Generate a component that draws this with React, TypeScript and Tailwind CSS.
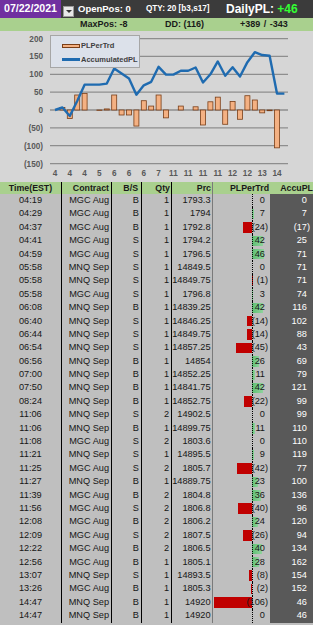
import React from "react";

type Row = [string, string, string, number, string, number, number];

const rows: Row[] = [
  ["04:19", "MGC Aug", "B", 1, "1793.3", 0, 0],
  ["04:29", "MGC Aug", "B", 1, "1794", 7, 7],
  ["04:37", "MGC Aug", "B", 1, "1792.8", -24, -17],
  ["04:41", "MGC Aug", "S", 1, "1794.2", 42, 25],
  ["04:59", "MGC Aug", "S", 1, "1796.5", 46, 71],
  ["05:58", "MNQ Sep", "S", 1, "14849.5", 0, 71],
  ["05:58", "MNQ Sep", "S", 1, "14849.75", -1, 71],
  ["05:58", "MGC Aug", "S", 1, "1796.8", 3, 74],
  ["06:08", "MNQ Sep", "B", 1, "14839.25", 42, 116],
  ["06:40", "MNQ Sep", "S", 1, "14846.25", -14, 102],
  ["06:44", "MNQ Sep", "S", 1, "14849.75", -14, 88],
  ["06:54", "MNQ Sep", "S", 1, "14857.25", -45, 43],
  ["06:56", "MNQ Sep", "B", 1, "14854", 26, 69],
  ["07:00", "MNQ Sep", "B", 1, "14852.25", 11, 79],
  ["07:50", "MNQ Sep", "B", 1, "14841.75", 42, 121],
  ["08:24", "MNQ Sep", "B", 1, "14852.75", -22, 99],
  ["11:06", "MNQ Sep", "S", 2, "14902.5", 0, 99],
  ["11:06", "MNQ Sep", "B", 1, "14899.75", 11, 110],
  ["11:08", "MGC Aug", "S", 2, "1803.6", 0, 110],
  ["11:21", "MNQ Sep", "S", 1, "14895.5", 9, 119],
  ["11:25", "MGC Aug", "S", 2, "1805.7", -42, 77],
  ["11:27", "MNQ Sep", "B", 1, "14889.75", 23, 100],
  ["11:39", "MGC Aug", "B", 2, "1804.8", 36, 136],
  ["11:56", "MGC Aug", "S", 2, "1806.8", -40, 96],
  ["12:08", "MGC Aug", "B", 2, "1806.2", 24, 120],
  ["12:09", "MGC Aug", "S", 2, "1807.5", -26, 94],
  ["12:22", "MGC Aug", "B", 2, "1806.5", 40, 134],
  ["12:56", "MGC Aug", "B", 1, "1805.1", 28, 162],
  ["13:07", "MNQ Sep", "S", 1, "14893.5", -8, 154],
  ["13:26", "MGC Aug", "B", 1, "1805.3", -2, 152],
  ["14:47", "MNQ Sep", "B", 1, "14920", -106, 46],
  ["14:47", "MNQ Sep", "B", 1, "14920", 0, 46],
];

const font = { fontFamily: '"Liberation Sans", Arial, sans-serif' };

// chart geometry (relative to chart top)
const zeroY = 79;
const k = 0.357;
const catX = (i: number) => 55 + 7.4 * i;
const valY = (v: number) => zeroY - v * k;

const Num = ({ v }: { v: number }) =>
  v < 0 ? (
    <span>({-v})</span>
  ) : (
    <span>
      {v}
      <span className="invisible">)</span>
    </span>
  );

const Chart = () => {
  const grid = [200, 150, 100, 50, 0, -50, -100, -150];
  const pts = rows.map((r, i) => `${catX(i)},${valY(r[6])}`).join(" ");
  return (
    <div className="relative h-[151px] bg-[#d6d6d6]">
      <svg width="313" height="151" className="block">
        {grid.map((g) => (
          <g key={g}>
            <line x1="50" x2="288" y1={valY(g)} y2={valY(g)} stroke="#8e8e8e" strokeWidth="1.3" />
            <text
              x="43"
              y={valY(g) + 3}
              textAnchor="end"
              fontSize="8.2"
              fontWeight="bold"
              fill="#595959"
              style={font}
            >
              {g < 0 ? `(${-g})` : g}
            </text>
          </g>
        ))}
        {rows.map((r, i) =>
          r[5] === 0 ? null : (
            <rect
              key={i}
              x={catX(i) - 2.5}
              y={Math.min(zeroY, valY(r[5]))}
              width="5"
              height={Math.abs(r[5]) * k}
              fill="#f4b183"
              stroke="#7a3e17"
              strokeWidth="0.8"
            />
          )
        )}
        <polyline points={pts} fill="none" stroke="#1f6bb0" strokeWidth="2.4" strokeLinejoin="round" />
        {rows.map((r, i) =>
          i % 2 === 0 ? (
            <text
              key={i}
              x={catX(i)}
              y="145"
              textAnchor="middle"
              fontSize="8.2"
              fontWeight="bold"
              fill="#595959"
              style={font}
            >
              {parseInt(r[0], 10)}
            </text>
          ) : null
        )}
      </svg>
      <div
        className="absolute left-[50px] top-[4px] w-[90px] h-[33px] bg-[#dce1ea] border border-[#a6a6a6] text-[7.5px] font-bold text-[#404040]"
        style={font}
      >
        <div className="flex items-center h-[17px] pl-[11px] pt-[2px]">
          <span className="w-[18px] h-[4px] bg-[#f4b183] border border-[#7a3e17]" />
          <span className="ml-[1px]">PLPerTrd</span>
        </div>
        <div className="flex items-center h-[13px] pl-[11px]">
          <span className="w-[18px] h-[2.5px] bg-[#1f6bb0]" />
          <span className="ml-[1px]">AccumulatedPL</span>
        </div>
      </div>
    </div>
  );
};

const cols = "grid grid-cols-[62px_50px_30px_30px_41px_57px_43px]";

export default function App() {
  return (
    <div className="w-[313px] h-[625px] overflow-hidden bg-[#bfbfbf]" style={font}>
      {/* top bar */}
      <div className="flex items-center h-[18px] bg-[#3b3b3b] text-white font-bold whitespace-nowrap">
        <div className="w-[61px] h-full bg-[#7030a0] flex items-center justify-center text-[10.6px]">
          07/22/2021
        </div>
        <div className="ml-[2px] mt-[4px] w-[11px] h-[11px] bg-[#e8e8e8] border border-[#9a9a9a] flex items-center justify-center">
          <span className="w-0 h-0 border-l-[3px] border-r-[3px] border-t-[3px] border-l-transparent border-r-transparent border-t-[#333]" />
        </div>
        <div className="ml-[4px] w-[68px] text-[9.5px]">OpenPos: 0</div>
        <div className="w-[80px] text-[8.2px]">QTY: 20 [b3,s17]</div>
        <div className="text-[12px]">
          DailyPL: <span className="text-[#33ff33]">+46</span>
        </div>
      </div>
      <div className="flex items-center h-[13px] bg-[#a9d08e] text-[9px] font-bold text-[#1a1a1a] whitespace-nowrap">
        <span className="ml-[80px] w-[85px]">MaxPos: -8</span>
        <span className="w-[75px]">DD: (116)</span>
        <span>
          +389 <span className="mx-[1px]">/</span> -343
        </span>
      </div>
      <Chart />
      {/* table header */}
      <div className={`${cols} h-[12px] bg-[#a9d08e] text-[8.8px] font-bold text-[#1a1a1a] leading-[12px] whitespace-nowrap`}>
        <div className="text-center border-r border-black">Time(EST)</div>
        <div className="text-right pr-[2px] border-r border-black">Contract</div>
        <div className="text-right pr-[3px] border-r border-black">B/S</div>
        <div className="text-right pr-[1px] border-r border-black">Qty</div>
        <div className="text-right pr-[1px] border-r border-[#7a7a7a]">Prc</div>
        <div className="text-right pr-[1px]">PLPerTrd</div>
        <div className="text-right pr-0">AccuPL</div>
      </div>
      {rows.map((r, i) => (
        <div
          key={i}
          className={`${cols} h-[13.4px] text-[9.2px] text-[#161616] leading-[13.4px] whitespace-nowrap`}
        >
          <div className="text-center border-r border-black">{r[0]}</div>
          <div className="text-right pr-[2px] border-r border-black">{r[1]}</div>
          <div className="text-right pr-[2px] border-r border-black">{r[2]}</div>
          <div className="text-right pr-[2px] border-r border-black">{r[3]}</div>
          <div className="text-right pr-[1.5px] border-r border-[#7a7a7a]">{r[4]}</div>
          <div className="relative text-right pr-[2px]">
            {r[5] < 0 && (
              <div
                className="absolute right-[18px] top-[1.5px] bottom-[1.5px] bg-[#c00000]"
                style={{ width: `${(-r[5] / 106) * 38}px` }}
              />
            )}
            {r[5] > 0 && (
              <div
                className="absolute left-[39px] top-[1.5px] bottom-[1.5px] bg-gradient-to-r from-[#5cbf72] to-[#8fd39d]"
                style={{ width: `${(r[5] / 46) * 12}px` }}
              />
            )}
            <div className="absolute left-[39px] top-0 bottom-0 border-l border-dotted border-black" />
            <span className="relative">
              <Num v={r[5]} />
            </span>
          </div>
          <div className="bg-[#595959] text-white text-right pr-[3px]">
            <Num v={r[6]} />
          </div>
        </div>
      ))}
    </div>
  );
}
